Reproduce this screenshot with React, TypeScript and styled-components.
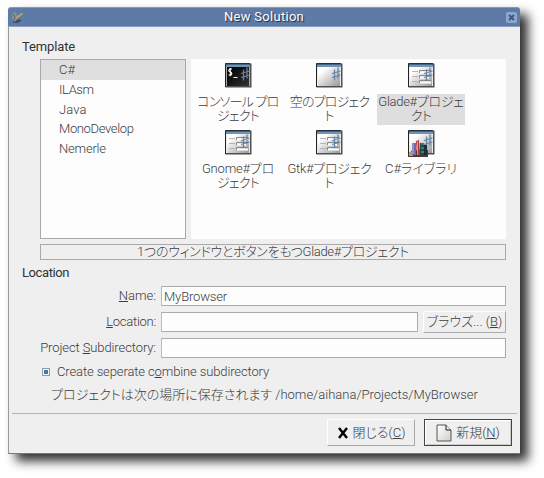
import React from "react";
import styled, { createGlobalStyle } from "styled-components";

const Global = createGlobalStyle`
  * { box-sizing: border-box; }
  body { margin: 0; background: #fff; overflow: hidden; }
`;
const Page = styled.main`
  width: 544px; height: 478px; padding: 7px 0 0 8px;
  font: 300 13px/16px Roboto, "Noto Sans CJK JP", sans-serif; color: #3c3c3c;
  font-feature-settings: "palt";
`;
const Dialog = styled.section`
  width: 512px; height: 447px; background: #efefef;
  border-radius: 3px 3px 0 0;
  box-shadow: 8px 7px 11px rgba(0,0,0,.82);
  display: flex; flex-direction: column;
`;
const TitleBar = styled.header`
  height: 20px; flex: none; display: grid; grid-template-columns: 24px 1fr 24px; align-items: center;
  background: #5e7ba8; border-top: 1px solid #8299bc; border-bottom: 1px solid #87a0c4;
  border-radius: 3px 3px 0 0; color: #fff;
`;
const Title = styled.h1`
  margin: 0; text-align: center; font-size: 13px; font-weight: 400; line-height: 18px;
  text-shadow: 1px 1px 1px #1b2940;
`;
const CloseBox = styled.span`
  width: 11px; height: 11px; margin-left: 10px; border-radius: 2px; background: #8fa7ca;
  display: grid; place-items: center;
`;
const Body = styled.div`
  flex: 1; border-left: 1px solid #999; border-bottom: 1px solid #777;
  display: flex; flex-direction: column; padding: 11px 13px 0 14px;
`;
const Heading = styled.h2`
  margin: 0 0 0 -1px; height: 21px; font-size: 13px; line-height: 18px; font-weight: 400; color: #333;
`;
const LocationHeading = styled(Heading)`
  margin-top: 4px; height: 22px;
`;
const Text = styled.span<{ $ls?: number; $size?: number }>`
  white-space: pre; letter-spacing: ${p => p.$ls ?? 0}px; font-size: ${p => p.$size ?? 13}px;
`;
const Panels = styled.div`
  display: flex; gap: 5px; height: 180px; margin-left: 17px; width: 466px;
`;
const LanguageList = styled.ul`
  list-style: none; margin: 0; padding: 0; width: 146px; background: #fdfdfd; border: 1px solid #a9a9a9;
`;
const Language = styled.li<{ $selected?: boolean }>`
  height: 19.8px; padding-left: 18px; line-height: 20px; background: ${p => p.$selected ? "#dfdfdf" : "none"};
`;
const TemplateGrid = styled.div`
  width: 315px; background: #fdfdfd; padding: 4px 0 0 3px;
  display: grid; grid-template-columns: repeat(3, 88px); column-gap: 3.5px; grid-template-rows: 67px 67px; align-content: start;
`;
const Template = styled.div`
  display: flex; flex-direction: column; align-items: center;
  svg { flex: none; display: block; }
`;
const Caption = styled.div<{ $selected?: boolean }>`
  width: 88px; height: 31px; margin-top: 4px; padding-top: 1px;
  display: flex; flex-direction: column; align-items: center; line-height: 14px;
  background: ${p => p.$selected ? "#dedede" : "none"};
`;
const Description = styled.div`
  margin: 5px 0 0 17px; width: 466px; height: 16px; flex: none; border: 1px solid #aaa;
  text-align: center; line-height: 14px;
`;
const Form = styled.div`
  display: grid; grid-template-columns: 133px 345px; column-gap: 5px; row-gap: 6px; grid-auto-rows: 20px;
`;
const Label = styled.label`
  text-align: right; line-height: 20px; white-space: nowrap;
`;
const Field = styled.div`
  height: 20px; flex: 1; background: #fdfdfd; border: 1px solid #aaa; border-left-color: #bbb; padding-left: 2px; line-height: 19px;
`;
const FieldRow = styled.div`
  display: flex; gap: 5px; align-items: center;
`;
const Button = styled.button<{ $primary?: boolean; $w: number; $h: number }>`
  width: ${p => p.$w}px; height: ${p => p.$h}px; flex: none; padding: 0; font: inherit; color: inherit; font-feature-settings: inherit;
  display: flex; align-items: center; justify-content: center; gap: 4px; background: #efefef;
  border: 1px solid; border-color: ${p => p.$primary ? "#444" : "#fff #aaa #aaa #fff"};
  ${p => p.$primary && "box-shadow: inset 1px 1px #fff, inset -1px -1px #ccc;"}
`;
const CheckRow = styled.div`
  height: 18px; margin: 5px 0 0 19px; display: flex; align-items: center; gap: 7px;
`;
const Check = styled.span`
  width: 8px; height: 8px; border: 1px solid #8d9bb0; background: #4a71a8; box-shadow: inset 0 0 0 1px #f7f7f7;
`;
const SavePath = styled.div`
  height: 18px; margin: 5px 0 0 28px; line-height: 18px; white-space: nowrap;
`;
const Rule = styled.div`
  height: 1px; flex: none; margin: 9px -10px 0 -11px; background: #b5b5b5;
`;
const Actions = styled.footer`
  display: flex; justify-content: flex-end; gap: 9px; margin: 5px -5px 0 0;
`;

type Kind = "console" | "empty" | "form" | "books";

const ProjectIcon = ({ kind }: { kind: Kind }) => {
  const dark = kind === "console";
  return (
    <svg width="27" height="27" viewBox="0 0 27 27">
      <defs>
        <linearGradient id={"g" + kind} x1="0" y1="0" x2="1" y2="1">
          <stop offset="0.2" stopColor={dark ? "#080808" : "#fff"} />
          <stop offset="1" stopColor={dark ? "#333" : "#999"} />
        </linearGradient>
      </defs>
      <rect x="0.5" y="0.5" width="26" height="24" fill="#505050" />
      <path d="M.5 24V.5H25" fill="none" stroke="#222" />
      <rect x="1" y="1" width="24" height="22" fill={dark ? "#aaa" : "#eee"} />
      <rect x="1" y="1" width="24" height="3" fill="#6f94b9" />
      <path d="M1 1.200H25" stroke="#34506c" />
      <rect x="2" y="4" width="22" height="19" fill={`url(#g${kind})`} />
      {dark && <path d="M7 6H4.500Q3 8 4.500 8.500L6 9.200Q7.500 11 6 12H3.500M5.300 5V13.200M8.500 14.500H12.500" fill="none" stroke="#fff" strokeWidth="1.100" />}
      {kind === "form" && (
        <g fill="none">
          <path d="M4 8.500H10M4 13.500H10M4 18.500H10" stroke="#b5b5b5" />
          <path d="M11.500 10V7.500H23M11.500 15V12.500H23M11.500 20V17.500H23" stroke="#888" />
          <path d="M12 9.500H23M12 14.500H23M12 19.500H23" stroke="#fff" strokeWidth="2" />
        </g>
      )}
      <path d="M18.500 6.500V17.500M22 4.500V15.500M16 10.500L24.500 8M16 14.500L24.500 12" fill="none" stroke={dark ? "#7895b3" : "#55789e"} strokeWidth="1.300" opacity="0.85" />
      {kind === "books" && (
        <g>
          <path d="M0 24L5 20H20V27H0Z" fill="#473a32" />
          <rect x="1" y="22" width="4" height="4" fill="#c7956a" />
          <path d="M4 13H8V25H4Z" fill="#716ba5" />
          <path d="M5 13V24" stroke="#bcb8df" />
          <path d="M8 11L11 10L12 25H9Z" fill="#b9343f" />
          <path d="M9.500 11V25" stroke="#f28784" />
          <path d="M12 13H16V26H12Z" fill="#194d47" />
          <path d="M13 14H16M13 18H16M13 22H16" stroke="#74a79b" />
          <path d="M16 15H19V25H16Z" fill="#202d33" />
        </g>
      )}
    </svg>
  );
};

const languages: [string, number][] = [
  ["C#", 0.1], ["ILAsm", -0.4], ["Java", 0.1], ["MonoDevelop", -0.36], ["Nemerle", -0.2],
];

type Line = [string, number];
const templates: { kind: Kind; lines: Line[]; selected?: boolean }[] = [
  { kind: "console", lines: [["コンソール プロ", -0.75], ["ジェクト", -0.8]] },
  { kind: "empty", lines: [["空のプロジェク", -0.85], ["ト", 0]] },
  { kind: "form", selected: true, lines: [["Glade#プロジェ", -0.3], ["クト", -0.8]] },
  { kind: "form", lines: [["Gnome#プロ", -0.2], ["ジェクト", -0.8]] },
  { kind: "form", lines: [["Gtk#プロジェク", -0.3], ["ト", 0]] },
  { kind: "books", lines: [["C#ライブラリ", 0]] },
];

export default function App() {
  return (
    <Page>
      <Global />
      <Dialog>
        <TitleBar>
          <svg width="16" height="14" viewBox="0 0 16 14">
            <path d="M6 9L14 10L10 13H5Z" fill="#3e4d62" />
            <path d="M4.500 3L8 2L9.500 9L7 12L4 9Z" fill="#8b9093" />
            <path d="M5 4L7 7L6 11" fill="none" stroke="#62676c" />
            <path d="M8 8L14.500 3.500" stroke="#b7a660" strokeWidth="2" />
          </svg>
          <Title><Text $ls={0.3}>New Solution</Text></Title>
          <CloseBox>
            <svg width="7" height="7" viewBox="0 0 7 7"><path d="M1 1L6 6M6 1L1 6" stroke="#3d5880" strokeWidth="2" /></svg>
          </CloseBox>
        </TitleBar>
        <Body>
          <Heading><Text $ls={-0.12}>Template</Text></Heading>
          <Panels>
            <LanguageList>
              {languages.map(([name, ls], i) => (
                <Language key={name} $selected={i === 0}><Text $ls={ls}>{name}</Text></Language>
              ))}
            </LanguageList>
            <TemplateGrid>
              {templates.map((t, i) => (
                <Template key={i}>
                  <ProjectIcon kind={t.kind} />
                  <Caption $selected={t.selected}>
                    {t.lines.map(([s, ls]) => <Text key={s} $ls={ls}>{s}</Text>)}
                  </Caption>
                </Template>
              ))}
            </TemplateGrid>
          </Panels>
          <Description><Text $ls={-0.31}>1つのウィンドウとボタンをもつGlade#プロジェクト</Text></Description>
          <LocationHeading><Text $ls={-0.4}>Location</Text></LocationHeading>
          <Form>
            <Label><Text><u>N</u>ame:</Text></Label>
            <FieldRow><Field><Text $ls={-0.15}>MyBrowser</Text></Field></FieldRow>
            <Label><Text $ls={-0.25}><u>L</u>ocation:</Text></Label>
            <FieldRow>
              <Field />
              <Button $w={83} $h={22}><Text>ブラウズ... (<u>B</u>)</Text></Button>
            </FieldRow>
            <Label><Text $ls={-0.1}>Project <u>S</u>ubdirectory:</Text></Label>
            <FieldRow><Field /></FieldRow>
          </Form>
          <CheckRow><Check /><Text $ls={-0.12}>Create seperate c<u>o</u>mbine subdirectory</Text></CheckRow>
          <SavePath><Text>プロジェクトは次の場所に保存されます</Text><Text> /home/aihana/Projects/MyBrowser</Text></SavePath>
          <Rule />
          <Actions>
            <Button $w={88} $h={27}>
              <svg width="12" height="12" viewBox="0 0 12 12"><path d="M2 1L10 11M10 1L2 11" stroke="#000" strokeWidth="2.500" /></svg>
              <Text>閉じる(<u>C</u>)</Text>
            </Button>
            <Button $primary $w={88} $h={27}>
              <svg width="16" height="18" viewBox="0 0 16 18">
                <defs><linearGradient id="paper" x1="0" y1="0" x2="1" y2="1"><stop stopColor="#fff" /><stop offset="1" stopColor="#d0d0c9" /></linearGradient></defs>
                <path d="M1 1H10L15 6V17H1Z" fill="url(#paper)" stroke="#555" />
                <path d="M10 1V6H15" fill="#eee" stroke="#222" />
              </svg>
              <Text>新規(<u>N</u>)</Text>
            </Button>
          </Actions>
        </Body>
      </Dialog>
    </Page>
  );
}
